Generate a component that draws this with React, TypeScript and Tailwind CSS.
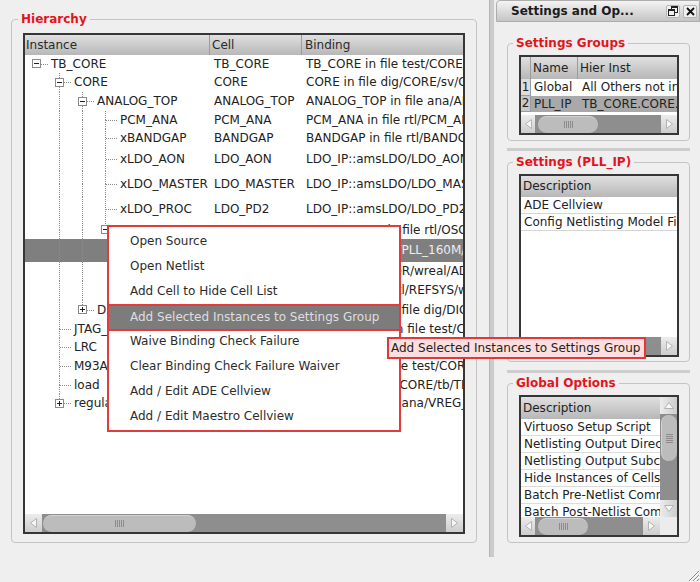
import React from "react";

type Row = {
  name: string;
  cell: string;
  binding: string;
  guides: boolean[];
  top: boolean;
  bottom: boolean;
  box?: "open" | "closed";
  h: string;
  sel?: boolean;
};

const A = [false, true, true];

const ROWS: Row[] = [
  { name: "TB_CORE", cell: "TB_CORE", binding: "TB_CORE in file test/CORE/tb/TB_CORE.sv", guides: [], top: false, bottom: false, box: "open", h: "h-[18px]" },
  { name: "CORE", cell: "CORE", binding: "CORE in file dig/CORE/sv/CORE.sv", guides: [false], top: true, bottom: true, box: "open", h: "h-[19px]" },
  { name: "ANALOG_TOP", cell: "ANALOG_TOP", binding: "ANALOG_TOP in file ana/ANALOG_TOP/verilog.v", guides: [false, true], top: true, bottom: true, box: "open", h: "h-[19px]" },
  { name: "PCM_ANA", cell: "PCM_ANA", binding: "PCM_ANA in file rtl/PCM_ANA/PCM_ANA.v", guides: A, top: true, bottom: true, h: "h-[18px]" },
  { name: "xBANDGAP", cell: "BANDGAP", binding: "BANDGAP in file rtl/BANDGAP/BANDGAP.v", guides: A, top: true, bottom: true, h: "h-[19px]" },
  { name: "xLDO_AON", cell: "LDO_AON", binding: "LDO_IP::amsLDO/LDO_AON/schematic", guides: A, top: true, bottom: true, h: "h-[23px]" },
  { name: "xLDO_MASTER", cell: "LDO_MASTER", binding: "LDO_IP::amsLDO/LDO_MASTER/schematic", guides: A, top: true, bottom: true, h: "h-[26px]" },
  { name: "xLDO_PROC", cell: "LDO_PD2", binding: "LDO_IP::amsLDO/LDO_PD2/schematic", guides: A, top: true, bottom: true, h: "h-[24px]" },
  { name: "OSC_RC_TOP", cell: "OSC_RC_TOP", binding: "OSC_RC_TOP in file rtl/OSC_RC_TOP/OSC.v", guides: A, top: true, bottom: false, box: "open", h: "h-[18px]" },
  { name: "xPLL", cell: "PLL_160M", binding: "PLL_IP::amsPLL/PLL_160M/schematic", guides: [false, true, true, false], top: true, bottom: true, h: "h-[23px]", sel: true },
  { name: "xSENSOR", cell: "ADC_SENSOR", binding: "dig/ADC_SENSOR/wreal/ADC_SENSOR.sv", guides: [false, true, true, false], top: true, bottom: true, h: "h-[19px]" },
  { name: "xREFSYS", cell: "REFSYS", binding: "REFSYS in file rtl/REFSYS/wreal/REFSYS.sv", guides: [false, true, true, false], top: true, bottom: false, h: "h-[19px]" },
  { name: "DIGITAL_TOP", cell: "DIGITAL_TOP", binding: "DIGITAL_TOP in file dig/DIGITAL_TOP/sv", guides: [false, true], top: true, bottom: false, box: "closed", h: "h-[20px]" },
  { name: "JTAG_MASTER", cell: "JTAG_MASTER", binding: "JTAG_MASTER in file test/CORE/jtag.sv", guides: [false], top: true, bottom: true, h: "h-[18px]" },
  { name: "LRC", cell: "LRC", binding: "LRC in file test/CORE/lrc.sv", guides: [false], top: true, bottom: true, h: "h-[19px]" },
  { name: "M93A_BFM", cell: "M93A_BFM", binding: "M93A_BFM in file test/CORE/m93a.sv", guides: [false], top: true, bottom: true, h: "h-[19px]" },
  { name: "load", cell: "load", binding: "load in file test/CORE/tb/TB_LOAD.sv", guides: [false], top: true, bottom: true, h: "h-[18px]" },
  { name: "regulator", cell: "VREG_TOP", binding: "regulator in file ana/VREG_TOP/verilog.v", guides: [false], top: true, bottom: false, box: "closed", h: "h-[19px]" },
];

const MENU = [
  "Open Source",
  "Open Netlist",
  "Add Cell to Hide Cell List",
  "Add Selected Instances to Settings Group",
  "Waive Binding Check Failure",
  "Clear Binding Check Failure Waiver",
  "Add / Edit ADE Cellview",
  "Add / Edit Maestro Cellview",
];

const GLOBAL_OPTS = [
  "Virtuoso Setup Script",
  "Netlisting Output Directory",
  "Netlisting Output Subcircuit File",
  "Hide Instances of Cells in List",
  "Batch Pre-Netlist Command",
  "Batch Post-Netlist Command",
];

const HEADER = "bg-linear-to-b from-[#e0e0e0] to-[#b7b7b7]";

function Branch({ top, bottom, right, box }: { top?: boolean; bottom?: boolean; right?: boolean; box?: "open" | "closed" }) {
  const dots = { stroke: "#8c8c8c", strokeDasharray: "1 1" };
  return (
    <svg className="w-[23px] h-full shrink-0" shapeRendering="crispEdges">
      {top && <line x1="11.5" y1="0" x2="11.5" y2="50%" {...dots} />}
      {bottom && <line x1="11.5" y1="50%" x2="11.5" y2="100%" {...dots} />}
      {right && <line x1="11.5" y1="50%" x2="23" y2="50%" {...dots} />}
      {box && (
        <svg y="50%" overflow="visible">
          <rect x="7.5" y="-4.5" width="8" height="8" fill="#fff" stroke="#8a8a8a" />
          <line x1="9" y1="-0.5" x2="14" y2="-0.5" stroke="#222" />
          {box === "closed" && <line x1="11.5" y1="-3" x2="11.5" y2="2" stroke="#222" />}
        </svg>
      )}
    </svg>
  );
}

function TreeRow({ r }: { r: Row }) {
  return (
    <div className={`${r.h} flex ${r.sel ? "bg-[#7f7f7f] text-[#eeeeee]" : ""}`}>
      <div className="w-[185px] shrink-0 flex overflow-hidden">
        {r.guides.map((g, i) => (
          <Branch key={i} top={g} bottom={g} />
        ))}
        <Branch top={r.top} bottom={r.bottom} right box={r.box} />
        <span className="pl-[3px] self-center whitespace-nowrap">{r.name}</span>
      </div>
      <div className="w-[92px] shrink-0 pl-[4px] flex items-center overflow-hidden whitespace-nowrap">{r.cell}</div>
      <div className="flex-1 min-w-0 pl-[4px] flex items-center overflow-hidden whitespace-nowrap">{r.binding}</div>
    </div>
  );
}

function Arrow({ dir }: { dir: "l" | "r" | "u" | "d" }) {
  const horiz = dir === "l" || dir === "r";
  const pts = { l: "6.5,0.5 0.5,5 6.5,9.5", r: "0.5,0.5 6.5,5 0.5,9.5", u: "0.5,6.5 5,0.5 9.5,6.5", d: "0.5,0.5 5,6.5 9.5,0.5" }[dir];
  return (
    <svg width={horiz ? 7 : 10} height={horiz ? 10 : 7}>
      <polygon points={pts} fill="#f7f7f7" stroke="#b3b3b3" />
    </svg>
  );
}

function Grip({ vertical }: { vertical?: boolean }) {
  const xs = [0.5, 2.5, 4.5, 6.5, 8.5];
  return vertical ? (
    <svg width="7" height="9">
      {xs.map((y) => (
        <line key={y} x1="0" y1={y} x2="7" y2={y} stroke="#8c8c8c" />
      ))}
    </svg>
  ) : (
    <svg width="9" height="7">
      {xs.map((x) => (
        <line key={x} x1={x} y1="0" x2={x} y2="7" stroke="#8c8c8c" />
      ))}
    </svg>
  );
}

const BTN_H = "flex items-center justify-center bg-linear-to-b from-[#ececec] to-[#cdcdcd] shrink-0";
const BTN_V = "flex items-center justify-center bg-linear-to-r from-[#ececec] to-[#cdcdcd] shrink-0";

function HScroll({ left, right, thumb }: { left: string; right: string; thumb: string }) {
  return (
    <div className="h-[18px] flex shrink-0">
      <div className={`${left} ${BTN_H}`}>
        <Arrow dir="l" />
      </div>
      <div className="flex-1 min-w-0 bg-[#8e8e8e] flex items-center">
        <div className={`${thumb} h-[17px] rounded-full bg-[#bcbcbc] border-t border-[#d2d2d2] flex items-center justify-center`}>
          <Grip />
        </div>
      </div>
      <div className={`${right} ${BTN_H}`}>
        <Arrow dir="r" />
      </div>
    </div>
  );
}

function VScroll() {
  return (
    <div className="w-[17px] flex flex-col shrink-0">
      <div className={`h-[17px] ${BTN_V}`}>
        <Arrow dir="u" />
      </div>
      <div className="flex-1 bg-[#8e8e8e] flex flex-col items-center">
        <div className="mt-[1px] h-[46px] w-[16px] rounded-full bg-[#bcbcbc] border-l border-[#d2d2d2] flex items-center justify-center">
          <Grip vertical />
        </div>
      </div>
      <div className={`h-[17px] ${BTN_V}`}>
        <Arrow dir="d" />
      </div>
    </div>
  );
}

function Group({ title, h, children }: { title: string; h: string; children: React.ReactNode }) {
  return (
    <fieldset className={`${h} min-w-0 border border-[#c4c4c4] rounded-[4px]`}>
      <legend className="ml-[5px] px-[3px] leading-[18px] font-bold text-[#e3141c] whitespace-nowrap">{title}</legend>
      {children}
    </fieldset>
  );
}

const FRAME = "mt-[3px] ml-[11px] mr-[10px] border-2 border-[#363636] bg-white flex flex-col overflow-hidden";

export default function App() {
  return (
    <div className="relative w-[700px] h-[582px] overflow-hidden bg-[#efefef] flex font-['DejaVu_Sans',sans-serif] text-[12px] leading-[15px] text-[#222]">
      {/* hierarchy pane */}
      <div className="w-[487px] shrink-0 pt-[10px] pl-[11px] pr-[10px]">
        <fieldset className="h-[533px] min-w-0 border border-[#c4c4c4] rounded-[4px]">
          <legend className="ml-[6px] px-[3px] leading-[18px] font-bold text-[#e3141c]">Hierarchy</legend>
          <div className="mt-[5px] mx-[11px] h-[501px] border-2 border-[#363636] bg-white flex flex-col overflow-hidden">
            <div className={`h-[20px] flex shrink-0 ${HEADER} text-[#2a2a2a]`}>
              <div className="w-[185px] shrink-0 pl-[1px] border-r border-[#9c9c9c] flex items-center">Instance</div>
              <div className="w-[92px] shrink-0 pl-[2px] border-r border-[#9c9c9c] flex items-center">Cell</div>
              <div className="flex-1 min-w-0 pl-[3px] flex items-center">Binding</div>
            </div>
            <div className="flex-1 overflow-hidden">
              {ROWS.map((r) => (
                <TreeRow key={r.name} r={r} />
              ))}
            </div>
            <HScroll left="w-[17px]" right="w-[17px]" thumb="ml-[1px] w-[153px]" />
          </div>
        </fieldset>
      </div>

      {/* splitter */}
      <div className="w-[9px] shrink-0">
        <div className="ml-[2px] w-[5px] h-[557px] bg-[#cbcbcb] border-l border-[#b4b4b4]" />
      </div>

      {/* settings dock */}
      <div className="w-[204px] shrink-0 min-w-0 flex flex-col">
        <div className="h-[22px] shrink-0 flex items-center bg-linear-to-b from-[#f4f4f4] to-[#c5c5c5] border border-[#adadad] rounded-tl-[4px] pl-[14px] pr-[2px]">
          <span className="flex-1 min-w-0 font-bold text-[#1c1c1c] whitespace-nowrap overflow-hidden">Settings and Op...</span>
          <div className="w-[14px] h-[13px] shrink-0 bg-[#f1f1f1] border border-[#b5b5b5] rounded-[2px] flex items-center justify-center">
            <svg width="10" height="10" shapeRendering="crispEdges">
              <rect x="3.5" y="0.5" width="6" height="6" fill="none" stroke="#222" />
              <line x1="3" y1="1.5" x2="10" y2="1.5" stroke="#222" />
              <rect x="0.5" y="3.5" width="6" height="6" fill="#f1f1f1" stroke="#222" />
              <line x1="0" y1="4.5" x2="7" y2="4.5" stroke="#222" />
            </svg>
          </div>
          <div className="ml-[3px] w-[14px] h-[13px] shrink-0 bg-[#f1f1f1] border border-[#b5b5b5] rounded-[2px] flex items-center justify-center">
            <svg width="9" height="9">
              <path d="M1 1 L8 8 M8 1 L1 8" stroke="#111" strokeWidth="1.8" />
            </svg>
          </div>
        </div>

        <div className="pl-[11px] pr-[10px] pt-[12px]">
          <Group title="Settings Groups" h="h-[107px]">
            <div className={`${FRAME} h-[80px]`}>
              <div className={`h-[22px] flex shrink-0 ${HEADER}`}>
                <div className="w-[10px] shrink-0 border-r border-[#9c9c9c]" />
                <div className="w-[47px] shrink-0 pl-[2px] border-r border-[#9c9c9c] flex items-center">Name</div>
                <div className="flex-1 min-w-0 pl-[2px] flex items-center whitespace-nowrap overflow-hidden">Hier Inst</div>
              </div>
              <div className="h-[17px] flex shrink-0">
                <div className="w-[10px] shrink-0 bg-[#dcdcdc] border-r border-b border-[#9c9c9c] flex items-center justify-center">1</div>
                <div className="w-[47px] shrink-0 pl-[3px] flex items-center">Global</div>
                <div className="flex-1 min-w-0 pl-[4px] flex items-center whitespace-nowrap overflow-hidden">All Others not in Groups</div>
              </div>
              <div className="h-[16px] flex shrink-0 bg-[#a9a9a9]">
                <div className="w-[10px] shrink-0 bg-[#c9c9c9] border-r border-b border-[#9c9c9c] flex items-center justify-center">2</div>
                <div className="w-[47px] shrink-0 pl-[3px] flex items-center whitespace-nowrap overflow-hidden">PLL_IP</div>
                <div className="flex-1 min-w-0 pl-[4px] flex items-center whitespace-nowrap overflow-hidden">TB_CORE.CORE.ANALOG_TOP.xPLL</div>
              </div>
              <div className="flex-1" />
              <HScroll left="w-[14px]" right="w-[16px]" thumb="ml-[3px] w-[60px]" />
            </div>
          </Group>

          <div className="mt-[7px] mb-[2px] h-[3px] bg-[#cdcdcd]" />

          <Group title="Settings (PLL_IP)" h="h-[209px]">
            <div className={`${FRAME} h-[183px]`}>
              <div className={`h-[21px] shrink-0 pl-[2px] flex items-center ${HEADER}`}>Description</div>
              {["ADE Cellview", "Config Netlisting Model Files"].map((t) => (
                <div key={t} className="h-[17px] shrink-0 pl-[3px] flex items-center border-b border-[#d6d6d6] whitespace-nowrap overflow-hidden">
                  {t}
                </div>
              ))}
              <div className="flex-1" />
              <HScroll left="w-[14px]" right="w-[16px]" thumb="ml-[3px] w-[60px]" />
            </div>
          </Group>

          <div className="mt-[8px] mb-[1px] h-[3px] bg-[#cdcdcd]" />

          <Group title="Global Options" h="h-[169px]">
            <div className={`${FRAME} h-[142px]`}>
              <div className="flex-1 min-h-0 flex overflow-hidden">
                <div className="flex-1 min-w-0 flex flex-col overflow-hidden">
                  <div className={`h-[22px] shrink-0 pl-[2px] flex items-center ${HEADER}`}>Description</div>
                  {GLOBAL_OPTS.map((t) => (
                    <div key={t} className="h-[17px] shrink-0 pl-[3px] flex items-center border-b border-[#dcdcdc] whitespace-nowrap overflow-hidden">
                      {t}
                    </div>
                  ))}
                </div>
                <VScroll />
              </div>
              <div className="flex shrink-0">
                <div className="flex-1 min-w-0">
                  <HScroll left="w-[14px]" right="w-[17px]" thumb="ml-[3px] w-[50px]" />
                </div>
                <div className="w-[17px] shrink-0 bg-[#ececec]" />
              </div>
            </div>
          </Group>
        </div>
      </div>

      {/* context menu */}
      <div className="absolute left-[107px] top-[225px] w-[294px] bg-white border-2 border-[#e23b3b] pt-[2px] pb-[1px] text-[#2c2c2c]">
        {MENU.map((m, i) =>
          i === 3 ? (
            <div key={m} className="-mx-[2px] h-[27px] -mb-[2px] pl-[21px] flex items-center bg-[#7c7c7c] text-[#dedede] border-2 border-[#e8393b] whitespace-nowrap">
              {m}
            </div>
          ) : (
            <div key={m} className="h-[25px] pl-[21px] flex items-center whitespace-nowrap">
              {m}
            </div>
          )
        )}
      </div>

      {/* tooltip */}
      <div className="absolute left-[387px] top-[337px] w-[259px] h-[22px] bg-[#fcdede] border-2 border-[#e0393b] pl-[2px] flex items-center whitespace-nowrap">
        Add Selected Instances to Settings Group
      </div>

      {/* size grip */}
      <svg className="absolute right-0 bottom-0" width="13" height="13">
        <path d="M12 2 L2 12 M12 6 L6 12 M12 10 L10 12" stroke="#8a8a8a" strokeWidth="1" />
        <path d="M12 3 L3 12 M12 7 L7 12" stroke="#fafafa" strokeWidth="1" />
      </svg>
    </div>
  );
}
